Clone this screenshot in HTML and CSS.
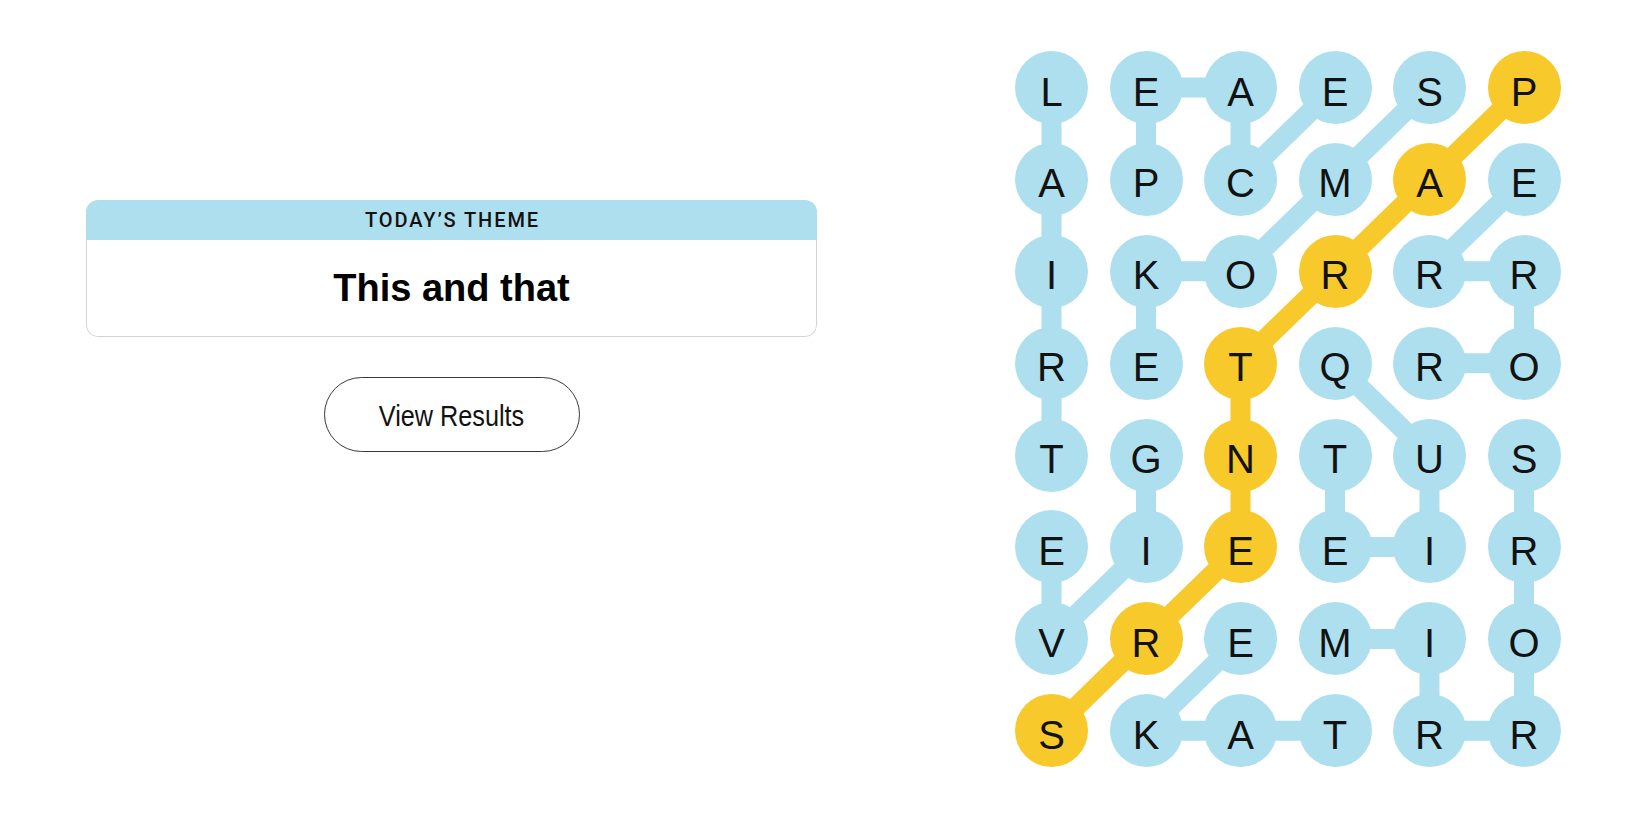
FILE: index.html
```html
<!DOCTYPE html>
<html lang="en">
<head>
<meta charset="utf-8">
<title>Strands</title>
<link rel="stylesheet" href="styles.css">
</head>
<body>
<main class="page">
  <section class="left">
    <div class="theme-card">
      <div class="theme-head">TODAY’S THEME</div>
      <div class="theme-body"><h1 class="theme-title">This and that</h1></div>
    </div>
    <button class="results-btn" type="button"><span class="btn-label">View Results</span></button>
  </section>
  <section class="right">
    <div class="board">
      <svg class="links" width="545.5" height="716.3" viewBox="0 0 545.5 716.3" aria-hidden="true">
        <g class="blue">
          <line x1="36.5" y1="404.1" x2="36.5" y2="36.5"/>
          <line x1="131" y1="404.1" x2="131" y2="496"/>
          <line x1="131" y1="496" x2="36.5" y2="587.9"/>
          <line x1="36.5" y1="587.9" x2="36.5" y2="496"/>
          <line x1="320" y1="679.8" x2="131" y2="679.8"/>
          <line x1="131" y1="679.8" x2="225.5" y2="587.9"/>
          <line x1="509" y1="128.4" x2="414.5" y2="220.3"/>
          <line x1="414.5" y1="220.3" x2="509" y2="220.3"/>
          <line x1="509" y1="220.3" x2="509" y2="312.2"/>
          <line x1="509" y1="312.2" x2="414.5" y2="312.2"/>
          <line x1="131" y1="128.4" x2="131" y2="36.5"/>
          <line x1="131" y1="36.5" x2="225.5" y2="36.5"/>
          <line x1="225.5" y1="36.5" x2="225.5" y2="128.4"/>
          <line x1="225.5" y1="128.4" x2="320" y2="36.5"/>
          <line x1="320" y1="312.2" x2="414.5" y2="404.1"/>
          <line x1="414.5" y1="404.1" x2="414.5" y2="496"/>
          <line x1="414.5" y1="496" x2="320" y2="496"/>
          <line x1="320" y1="496" x2="320" y2="404.1"/>
          <line x1="414.5" y1="36.5" x2="320" y2="128.4"/>
          <line x1="320" y1="128.4" x2="225.5" y2="220.3"/>
          <line x1="225.5" y1="220.3" x2="131" y2="220.3"/>
          <line x1="131" y1="220.3" x2="131" y2="312.2"/>
          <line x1="320" y1="587.9" x2="414.5" y2="587.9"/>
          <line x1="414.5" y1="587.9" x2="414.5" y2="679.8"/>
          <line x1="414.5" y1="679.8" x2="509" y2="679.8"/>
          <line x1="509" y1="679.8" x2="509" y2="404.1"/>
        </g>
        <polyline class="gold" points="509,36.5 414.5,128.4 320,220.3 225.5,312.2 225.5,404.1 225.5,496 131,587.9 36.5,679.8"/>
      </svg>
      <span class="cell">L</span><span class="cell">E</span><span class="cell">A</span><span class="cell">E</span><span class="cell">S</span><span class="cell found">P</span>
      <span class="cell">A</span><span class="cell">P</span><span class="cell">C</span><span class="cell">M</span><span class="cell found">A</span><span class="cell">E</span>
      <span class="cell">I</span><span class="cell">K</span><span class="cell">O</span><span class="cell found">R</span><span class="cell">R</span><span class="cell">R</span>
      <span class="cell">R</span><span class="cell">E</span><span class="cell found">T</span><span class="cell">Q</span><span class="cell">R</span><span class="cell">O</span>
      <span class="cell">T</span><span class="cell">G</span><span class="cell found">N</span><span class="cell">T</span><span class="cell">U</span><span class="cell">S</span>
      <span class="cell">E</span><span class="cell">I</span><span class="cell found">E</span><span class="cell">E</span><span class="cell">I</span><span class="cell">R</span>
      <span class="cell">V</span><span class="cell found">R</span><span class="cell">E</span><span class="cell">M</span><span class="cell">I</span><span class="cell">O</span>
      <span class="cell found">S</span><span class="cell">K</span><span class="cell">A</span><span class="cell">T</span><span class="cell">R</span><span class="cell">R</span>
    </div>
  </section>
</main>
</body>
</html>
```
FILE: styles.css
```css
* { box-sizing: border-box; }
html, body { margin: 0; padding: 0; background: #ffffff; }
body { font-family: "Liberation Sans", Arial, sans-serif; color: #121212; }

.page {
  display: flex;
  width: 1650px;
  height: 825px;
}

.left {
  width: 903px;
  padding-top: 200px;
  display: flex;
  flex-direction: column;
  align-items: center;
}

.theme-card {
  width: 731px;
  border-radius: 12px;
  overflow: hidden;
}

.theme-head {
  height: 40px;
  background: #aedfee;
  display: flex;
  align-items: center;
  justify-content: center;
  font-family: Roboto, "Liberation Sans", sans-serif;
  font-weight: 500;
  font-size: 20px;
  letter-spacing: 1.9px;
  color: #121212;
  padding-left: 2px;
}

.theme-body {
  height: 97px;
  border: 1px solid #d3d3d3;
  border-top: none;
  border-radius: 0 0 12px 12px;
  display: flex;
  align-items: center;
  justify-content: center;
}

.theme-title {
  margin: 0;
  font-family: "Liberation Sans", Arial, sans-serif;
  font-weight: 700;
  font-size: 38px;
  line-height: 1;
  color: #000;
}

.results-btn {
  margin-top: 40px;
  width: 256px;
  height: 75px;
  border: 1px solid #3a3a3a;
  border-radius: 999px;
  background: #fff;
  color: #121212;
  font-family: "Liberation Sans", Arial, sans-serif;
  font-size: 29px;
  padding: 4px 0 0 0;
  display: flex;
  align-items: center;
  justify-content: center;
}

.btn-label {
  display: inline-block;
  transform: scaleX(0.87);
}

.right {
  padding-top: 51px;
  padding-left: 112px;
}

.board {
  position: relative;
  display: grid;
  grid-template-columns: repeat(6, 73px);
  grid-auto-rows: 73px;
  column-gap: 21.5px;
  row-gap: 18.9px;
}

.links {
  position: absolute;
  left: 0;
  top: 0;
  z-index: 0;
}

.links .blue line {
  stroke: #aedfee;
  stroke-width: 20;
}

.links .gold {
  fill: none;
  stroke: #f7c92a;
  stroke-width: 20;
  stroke-linejoin: round;
}

.cell {
  position: relative;
  z-index: 1;
  width: 73px;
  height: 73px;
  border-radius: 50%;
  background: #aedfee;
  display: flex;
  align-items: center;
  justify-content: center;
  padding-top: 8px;
  font-family: "Liberation Sans", Arial, sans-serif;
  font-size: 40px;
  line-height: 1;
  color: #121212;
}

.cell.found { background: #f7c92a; }
```
